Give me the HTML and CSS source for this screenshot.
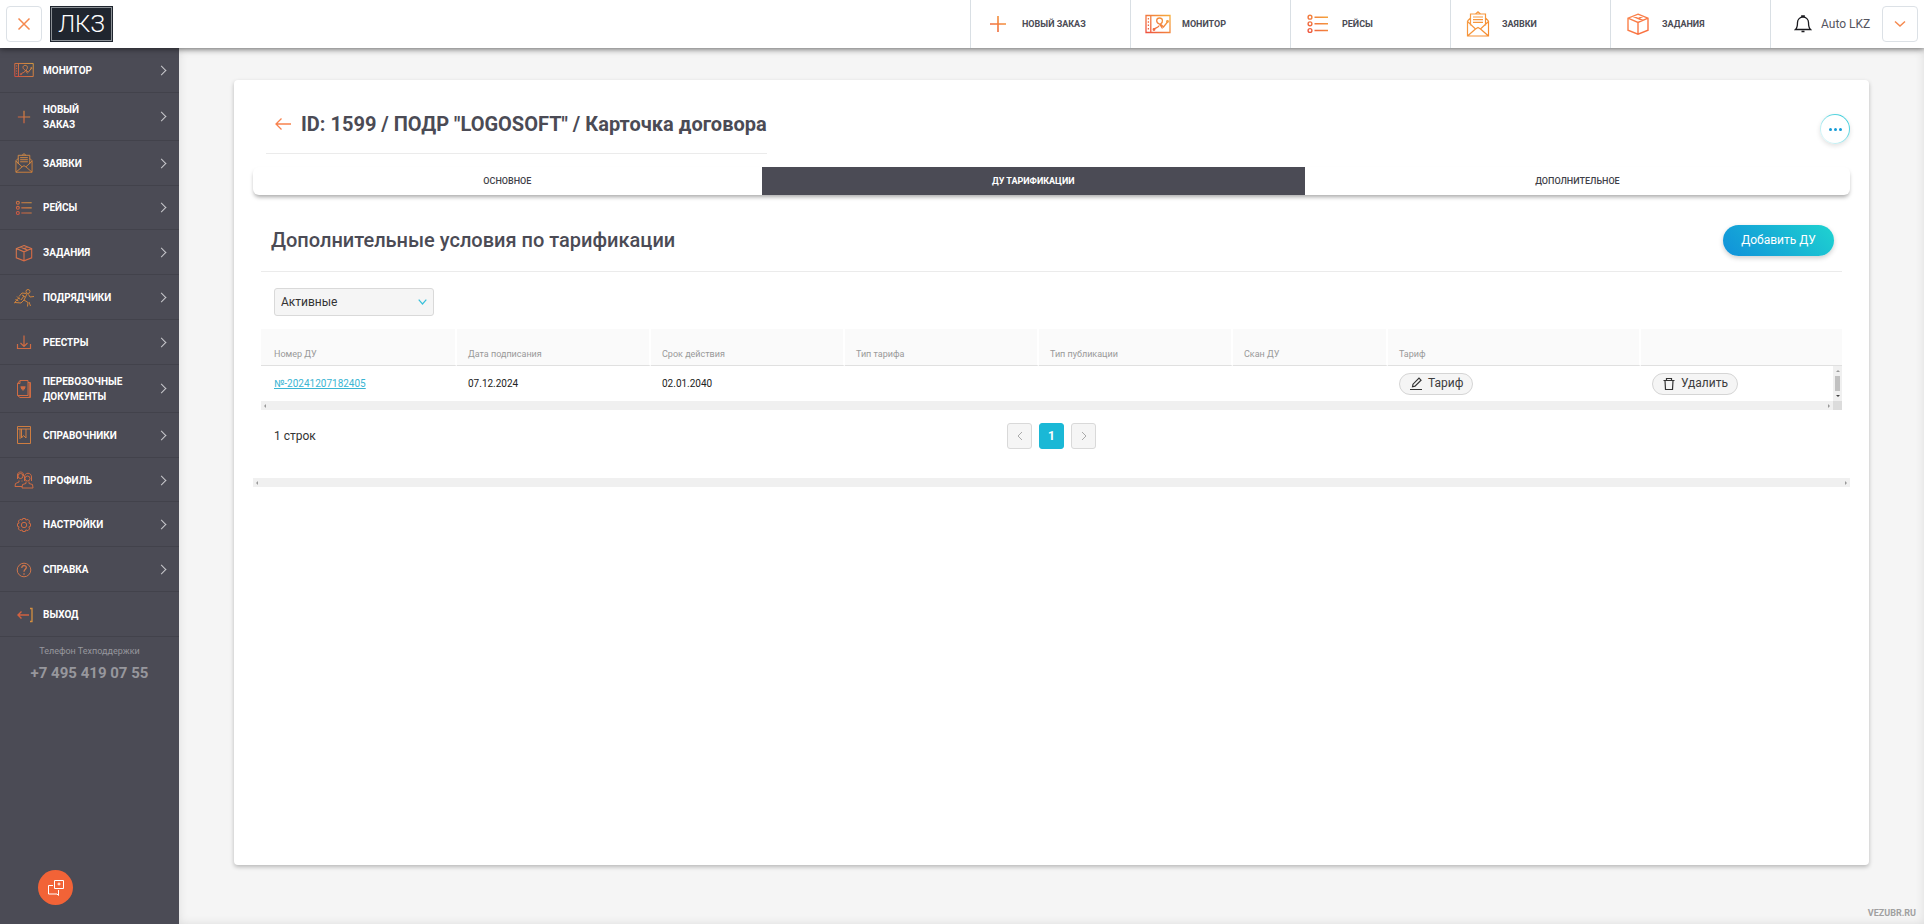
FILE: index.html
```
<!DOCTYPE html>
<html lang="ru">
<head>
<meta charset="utf-8">
<title>Карточка договора</title>
<link rel="stylesheet" href="styles.css">
</head>
<body>
<svg class="sprite" aria-hidden="true">
  <defs>
    <linearGradient id="warm" gradientUnits="userSpaceOnUse" x1="2" y1="24" x2="24" y2="2"><stop offset="0" stop-color="#ee4d3f"/><stop offset="1" stop-color="#f6b03c"/></linearGradient>
    <linearGradient id="amber" gradientUnits="userSpaceOnUse" x1="0" y1="0" x2="26" y2="26"><stop offset="0" stop-color="#f7a04a"/><stop offset="1" stop-color="#f58a2c"/></linearGradient>
    <linearGradient id="coral" gradientUnits="userSpaceOnUse" x1="0" y1="0" x2="26" y2="26"><stop offset="0" stop-color="#fb8a50"/><stop offset="1" stop-color="#f96a3c"/></linearGradient>
  </defs>
  <symbol id="i-plus" viewBox="0 0 26 26"><path d="M13 5v16M5 13h16" stroke="url(#warm)" stroke-width="1.6"/></symbol>
  <symbol id="i-monitor" viewBox="0 0 26 26"><g stroke="url(#warm)" stroke-width="1.3"><path d="M1 4.500h24v17H1zM5.800 4.500v17"/><path d="M3.400 7v1.500M3.400 10.300v1.500M3.400 13.600v1.500M3.400 17v1.500"/><path d="M9 18.500c1-2.500 5-1.500 5-4M17.500 17.500l-3-4.500c-4-1.500-3.500-6 0-6s4 4 1 6l3 3 4-5"/><circle cx="9" cy="18.500" r=".8"/><circle cx="22.500" cy="10.500" r=".8"/></g></symbol>
  <symbol id="i-mail" viewBox="0 0 26 26"><g stroke="url(#amber)" stroke-width="1.2"><path d="M5.500 14.500V3h15v11.500M2.500 10v15h21V10M2.500 10l3-3M23.500 10l-3-3M10.500 3L13 .8 15.500 3M2.500 10.500l8 7.500L13 16.500l2.500 1.500 8-7.500M2.500 25l8-7M23.500 25l-8-7"/><path d="M8 6h10M8 8.700h10M8 11.400h10"/></g></symbol>
  <symbol id="i-list" viewBox="0 0 26 26"><g stroke="url(#warm)" stroke-width="1.400"><circle cx="5" cy="6.200" r="1.900"/><circle cx="5" cy="12.800" r="1.900"/><circle cx="5" cy="19.500" r="1.900"/><path d="M9.500 6.200H23M9.500 12.800H23M9.500 19.500H23"/></g></symbol>
  <symbol id="i-box" viewBox="0 0 26 26"><path d="M13 3.200l10 4v12l-10 4-10-4v-12zM3 7.200l10 4.300 10-4.300M13 11.500v11.700M8 5.300l10 4.200M18 5.300l-4.500 2" stroke="url(#coral)" stroke-width="1.400"/></symbol>
</svg>

<header class="topbar">
  <div class="topbar-left">
    <button class="square-btn" aria-label="Закрыть меню"><svg width="14" height="14" viewBox="0 0 14 14"><path d="M1.500 1.500l11 11M12.500 1.500l-11 11" stroke="#f5894f" stroke-width="1.500"/></svg></button>
    <a class="logo" href="#">ЛКЗ</a>
  </div>
  <nav class="quick">
    <a href="#"><svg class="quick-icon"><use href="#i-plus"/></svg>НОВЫЙ ЗАКАЗ</a>
    <a href="#"><svg class="quick-icon"><use href="#i-monitor"/></svg>МОНИТОР</a>
    <a href="#"><svg class="quick-icon"><use href="#i-list"/></svg>РЕЙСЫ</a>
    <a href="#"><svg class="quick-icon"><use href="#i-mail"/></svg>ЗАЯВКИ</a>
    <a href="#"><svg class="quick-icon"><use href="#i-box"/></svg>ЗАДАНИЯ</a>
  </nav>
  <div class="user">
    <svg width="18" height="18" viewBox="0 0 18 18"><path d="M1.500 14.500C3 13 3.500 12 3.500 7.500a5.500 5.500 0 0 1 11 0C14.500 12 15 13 16.500 14.500zM7.800 2V.8h2.400V2M7.500 16.500h3" stroke="#1b1b1f" stroke-width="1.300"/></svg>
    <span class="user-name">Auto LKZ</span>
    <button class="square-btn" aria-label="Меню пользователя"><svg width="12" height="8" viewBox="0 0 12 8"><path d="M1 1.500l5 4.500 5-4.500" stroke="#f5894f" stroke-width="1.500"/></svg></button>
  </div>
</header>

<div class="shell">
  <aside class="sidebar">
    <nav class="menu">
      <a class="menu-item" href="#"><svg class="menu-icon"><use href="#i-monitor"/></svg><span>МОНИТОР</span><i class="arrow"></i></a>
      <a class="menu-item two-line" href="#"><svg class="menu-icon"><use href="#i-plus"/></svg><span>НОВЫЙ<br>ЗАКАЗ</span><i class="arrow"></i></a>
      <a class="menu-item" href="#"><svg class="menu-icon"><use href="#i-mail"/></svg><span>ЗАЯВКИ</span><i class="arrow"></i></a>
      <a class="menu-item" href="#"><svg class="menu-icon"><use href="#i-list"/></svg><span>РЕЙСЫ</span><i class="arrow"></i></a>
      <a class="menu-item" href="#"><svg class="menu-icon"><use href="#i-box"/></svg><span>ЗАДАНИЯ</span><i class="arrow"></i></a>
      <a class="menu-item" href="#"><svg class="menu-icon" viewBox="0 0 20 20"><g stroke="#f09238"><circle cx="14" cy="3.500" r="2"/><path d="M12.500 5.500L8 5 5 8.500M13 6l-3 6 4 2.500-.5 4M14.500 6.500L16 9l4-.5M10 12l-3 3-6-.5M8 7l2 1-3 4M0 15.500l4-5 2-.5M1.500 11.500l3 1.500M3 8.500l3 3M15 14l1.500 4M11 9l-1.500-1"/></g></svg><span>ПОДРЯДЧИКИ</span><i class="arrow"></i></a>
      <a class="menu-item" href="#"><svg class="menu-icon" viewBox="0 0 20 20"><path d="M10 3.500v11M6.500 11l3.500 3.500 3.500-3.500M3.500 12v4.500h13V12" stroke="#f0743f" stroke-width="1.200"/></svg><span>РЕЕСТРЫ</span><i class="arrow"></i></a>
      <a class="menu-item two-line" href="#"><svg class="menu-icon" viewBox="0 0 20 20"><path d="M6 1.500h8v15H3.500v-12zM6 1.500v3H3.500M14 3.500h2.500v15H6l-2.500-2M15.300 4v14" stroke="#f0743f"/><path d="M6.500 8h5M7 9.500h4M9 11.500V10" stroke="#f0743f" stroke-width="1.500"/></svg><span>ПЕРЕВОЗОЧНЫЕ<br>ДОКУМЕНТЫ</span><i class="arrow"></i></a>
      <a class="menu-item" href="#"><svg class="menu-icon" viewBox="0 0 20 20"><path d="M3.500 1.500h13v17h-13zM3.500 4h13M6 4v10M7.500 4v9l2-2.500L12 13V4" stroke="#f08a3c"/></svg><span>СПРАВОЧНИКИ</span><i class="arrow"></i></a>
      <a class="menu-item" href="#"><svg class="menu-icon" viewBox="0 0 20 20"><g stroke="#f0743f"><circle cx="6.500" cy="6" r="2.500"/><path d="M3.500 9V5c0-4 6-4 6 0v1M5 10.500v1.500l-3.500 1.500-.5 3h7M8 10.500v1"/><circle cx="13.500" cy="8.500" r="2.500"/><path d="M10.500 11V7c0-5 7-5 7 0v4M12 11.500v2l-3.500 1-.5 3.500h11l-.5-3.500-3.500-1v-2"/></g></svg><span>ПРОФИЛЬ</span><i class="arrow"></i></a>
      <a class="menu-item" href="#"><svg class="menu-icon" viewBox="0 0 20 20"><circle cx="10" cy="10" r="2.700" stroke="#f0743f"/><path d="M8.700 3.500h2.600l.6 1.600 2-.7 1.700 1.700-.7 2 1.600.6v2.600l-1.600.6.7 2-1.700 1.700-2-.7-.6 1.600H8.700l-.6-1.600-2 .7-1.700-1.700.7-2-1.600-.6V8.700l1.600-.6-.7-2 1.700-1.700 2 .7z" stroke="#f0743f"/></svg><span>НАСТРОЙКИ</span><i class="arrow"></i></a>
      <a class="menu-item" href="#"><svg class="menu-icon" viewBox="0 0 20 20"><circle cx="10" cy="10" r="6.800" stroke="#f08048"/><path d="M7.800 8c0-3.500 5-3 4.500-.3C12 9.300 10 9.500 10 11.800M10 13.300v1.400" stroke="#f08048" stroke-width="1.300"/></svg><span>СПРАВКА</span><i class="arrow"></i></a>
      <a class="menu-item" href="#"><svg class="menu-icon" viewBox="0 0 20 20"><path d="M15 10H4M7.500 6.500L4 10l3.500 3.500" stroke="#f4683c" stroke-width="1.400"/><path d="M16 3.500h2v13h-2" stroke="#f6a03c" stroke-width="1.300"/></svg><span>ВЫХОД</span></a>
    </nav>
    <div class="support"><p>Телефон Техподдержки</p><a href="tel:+74954190755">+7 495 419 07 55</a></div>
    <button class="chat" aria-label="Чат"><svg width="18" height="18" viewBox="0 0 18 18"><path d="M7.500 1.500h9v8h-9zM6 6.500H1.500v8.500h8.500l1.500 1.500V11M12 3.500v3M10.500 5h3" stroke="#fff"/></svg></button>
  </aside>

  <main class="main">
    <section class="card">
      <div class="card-head">
        <div class="title">
          <a href="#" aria-label="Назад"><svg width="16" height="14" viewBox="0 0 16 14"><path d="M16 7H1M6.500 1.500L1 7l5.500 5.500" stroke="#f8824e" stroke-width="1.300"/></svg></a>
          <h1>ID: 1599 / ПОДР "LOGOSOFT" / Карточка договора</h1>
        </div>
        <button class="more" aria-label="Ещё"><i></i><i></i><i></i></button>
      </div>
      <div class="tabs" role="tablist">
        <button role="tab">ОСНОВНОЕ</button>
        <button role="tab" class="active" aria-selected="true">ДУ ТАРИФИКАЦИИ</button>
        <button role="tab">ДОПОЛНИТЕЛЬНОЕ</button>
      </div>
      <div class="content">
        <div class="section-head">
          <h2>Дополнительные условия по тарификации</h2>
          <button class="add">Добавить ДУ</button>
        </div>
        <div class="filter">
          <select aria-label="Статус"><option>Активные</option></select>
          <svg class="filter-arrow" width="9" height="6" viewBox="0 0 9 6"><path d="M.7.700l3.800 4.300L8.300.7" stroke="#38c0da" stroke-width="1.200"/></svg>
        </div>
        <div class="grid-box">
          <table>
            <colgroup><col class="c-first"><col class="c-mid"><col class="c-mid"><col class="c-mid"><col class="c-mid"><col class="c-scan"><col class="c-rate"><col></colgroup>
            <thead><tr><th>Номер ДУ</th><th>Дата подписания</th><th>Срок действия</th><th>Тип тарифа</th><th>Тип публикации</th><th>Скан ДУ</th><th>Тариф</th><th></th></tr></thead>
            <tbody><tr>
              <td><a href="#">№-20241207182405</a></td><td>07.12.2024</td><td>02.01.2040</td><td></td><td></td><td></td>
              <td><button class="pill"><svg width="14" height="14" viewBox="0 0 14 14"><path d="M1 12.500h12M3.500 9.800l.5-2.600L10 1.200l2 2-6 6z" stroke="#333" stroke-width="1.200"/></svg>Тариф</button></td>
              <td><button class="pill"><svg width="14" height="14" viewBox="0 0 14 14"><path d="M1.500 3.500h11M3 3.500l.5 9h7l.5-9M4.500 3.500v-2h5v2" stroke="#333" stroke-width="1.200"/></svg>Удалить</button></td>
            </tr></tbody>
          </table>
          <div class="vscroll"><i class="up"></i><i class="thumb"></i><i class="down"></i></div>
          <div class="hscroll inner"><i class="left"></i><i class="right"></i></div>
        </div>
        <div class="pager">
          <span class="count">1 строк</span>
          <div class="pages">
            <button aria-label="Предыдущая"><svg width="6" height="10" viewBox="0 0 6 10"><path d="M5 1L1 5l4 4" stroke="#aaa"/></svg></button>
            <button class="current">1</button>
            <button aria-label="Следующая"><svg width="6" height="10" viewBox="0 0 6 10"><path d="M1 1l4 4-4 4" stroke="#aaa"/></svg></button>
          </div>
        </div>
      </div>
      <div class="hscroll"><i class="left"></i><i class="right"></i></div>
    </section>
    <footer class="footer">VEZUBR.RU</footer>
  </main>
</div>
</body>
</html>
```
FILE: styles.css
```
* { box-sizing: border-box; }
body {
  margin: 0;
  min-height: 100vh;
  display: flex;
  flex-direction: column;
  font-family: Roboto, sans-serif;
  font-size: 10px;
  line-height: 15px;
  color: #333;
  background: #f5f5f5;
}
svg { fill: none; flex: none; }
a { color: inherit; text-decoration: none; }
button { font: inherit; color: inherit; padding: 0; border: 0; background: none; cursor: pointer; }
h1, h2, p { margin: 0; }
.sprite { position: absolute; width: 0; height: 0; }

/* Top bar */
.topbar {
  position: relative;
  z-index: 2;
  display: flex;
  height: 48px;
  background: #fff;
  box-shadow: 0 1px 6px rgba(0, 0, 0, .55);
}
.topbar-left { flex: 1; display: flex; align-items: center; gap: 8px; padding-left: 6px; }
.square-btn {
  width: 36px;
  height: 36px;
  display: grid;
  place-items: center;
  border: 1px solid #dce1e6;
  border-radius: 4px;
  background: #fff;
}
.logo {
  width: 63px;
  height: 36px;
  border: 1px solid #20262f;
  outline: 1px solid #8c9196;
  outline-offset: -2px;
  background: #20262f;
  color: #fff;
  font-size: 24px;
  font-weight: 300;
  line-height: 34px;
  text-align: center;
}
.quick { display: flex; }
.quick a {
  width: 160px;
  display: flex;
  align-items: center;
  gap: 11px;
  padding-left: 14px;
  border-left: 1px solid #d9dfe4;
  color: #4b4b55;
  font-weight: 700;
  font-size: 9px;
}
.quick-icon { width: 26px; height: 26px; }
.user {
  width: 154px;
  display: flex;
  align-items: center;
  gap: 9px;
  padding: 0 6px 0 23px;
  border-left: 1px solid #d9dfe4;
  color: #55555f;
  font-size: 12px;
}
.user-name { flex: 1; white-space: nowrap; }

/* Layout */
.shell { flex: 1; display: flex; }
.sidebar { width: 179px; background: #4b4b55; color: #fff; position: relative; }
.menu { min-height: 589px; display: flex; flex-direction: column; }
.menu-item {
  flex: 1 0 44px;
  display: flex;
  align-items: center;
  gap: 9px;
  padding: 1px 14px 0;
  border-bottom: 1px solid #42424b;
  font-weight: 700;
}
.two-line { flex-basis: 47px; }
.menu-icon { width: 20px; height: 20px; opacity: .8; }
.menu-item span { flex: 1; }
.arrow { width: 7px; height: 7px; border: solid #c9c9cd; border-width: 1px 1px 0 0; transform: rotate(45deg); }
.support { padding-top: 7px; text-align: center; color: #97979d; font-size: 9px; }
.support a { display: block; margin-top: 4px; font-size: 15px; font-weight: 700; line-height: 20px; }
.chat {
  position: absolute;
  left: 38px;
  bottom: 19px;
  width: 35px;
  height: 35px;
  display: grid;
  place-items: center;
  border-radius: 50%;
  background: #f26337;
}
.main {
  flex: 1;
  min-width: 0;
  display: flex;
  flex-direction: column;
  padding: 32px 55px 0;
  box-shadow: inset 0 0 10px rgba(0, 0, 0, .1);
}
.card {
  flex: 1;
  padding: 0 19px;
  border-radius: 4px;
  background: #fff;
  box-shadow: 0 2px 4px rgba(0, 0, 0, .25);
}
.footer {
  height: 59px;
  padding-top: 41px;
  margin-right: -47px;
  text-align: right;
  color: #a0a0a0;
  font-size: 9px;
  font-weight: 700;
}

/* Card */
.card-head { display: flex; justify-content: space-between; align-items: center; height: 87px; }
.title {
  display: flex;
  align-items: center;
  gap: 10px;
  height: 61px;
  margin-left: 13px;
  padding: 2px 0 0 9px;
  border-bottom: 1px solid #ebebeb;
}
.title a { display: flex; }
h1, h2 { font-size: 20px; line-height: 26px; color: #4b4b55; }
h1 { font-weight: 700; }
h2 { font-weight: 500; }
.more {
  width: 30px;
  height: 30px;
  margin-top: 11px;
  display: flex;
  justify-content: center;
  align-items: center;
  gap: 2px;
  border: 1px solid transparent;
  border-radius: 50%;
  background: linear-gradient(#fff, #fff) padding-box, linear-gradient(45deg, #fff, #19c5d4) border-box;
  box-shadow: 0 2px 5px rgba(0, 0, 0, .12);
}
.more i { width: 3px; height: 3px; border-radius: 50%; background: #149bd7; }
.tabs {
  display: flex;
  height: 28px;
  border-radius: 6px;
  box-shadow: 0 3px 4px -1px rgba(0, 0, 0, .35);
}
.tabs button { flex: 1 1 auto; color: #3f3f48; font-size: 9px; font-weight: 500; }
.tabs .active { background: #4b4b55; color: #fff; font-weight: 700; }
.content { padding: 0 8px; }
.section-head {
  display: flex;
  justify-content: space-between;
  align-items: center;
  height: 77px;
  padding: 14px 8px 0 10px;
  border-bottom: 1px solid #ebebeb;
}
.add {
  width: 111px;
  height: 31px;
  border-radius: 16px;
  background: linear-gradient(45deg, #1090da, #1fd3d0);
  box-shadow: 0 2px 5px rgba(0, 0, 0, .2);
  color: #fff;
  font-size: 12px;
}
.filter { position: relative; width: 160px; margin: 16px 13px 13px; }
.filter select {
  width: 100%;
  height: 28px;
  padding: 0 6px;
  border: 1px solid #d9d9d9;
  border-radius: 3px;
  background: #f5f5f5;
  appearance: none;
  color: #333;
  font: 12px Roboto, sans-serif;
  display: block;
}
.filter-arrow { position: absolute; right: 7px; top: 11px; pointer-events: none; }

/* Table */
.grid-box { position: relative; }
table { width: 100%; table-layout: fixed; border-collapse: separate; border-spacing: 0; }
.c-first { width: 196px; }
.c-mid { width: 194px; }
.c-scan { width: 155px; }
.c-rate { width: 253px; }
th {
  height: 37px;
  padding: 14px 11px 0;
  border-right: 2px solid #fff;
  border-bottom: 1px solid #e0e0e0;
  background: #fafafa;
  color: #999;
  font-weight: 400;
  font-size: 9px;
  text-align: left;
}
th:last-child { border-right: 0; }
td { height: 35px; padding: 0 11px; color: #222; }
th:first-child, td:first-child { padding-left: 13px; }
td a { color: #3ab5d3; text-decoration: underline; }
.pill {
  display: flex;
  align-items: center;
  gap: 5px;
  height: 22px;
  padding: 0 9px;
  border: 1px solid #d5d5d5;
  border-radius: 11px;
  background: #f5f5f5;
  color: #3d3d3d;
  font-size: 12px;
}
.hscroll { display: flex; justify-content: space-between; align-items: center; height: 9px; padding: 0 3px; background: #f0f0f0; }
.hscroll i { border: 2px solid transparent; }
.hscroll .left { border-right-color: #999; border-left: 0; }
.hscroll .right { border-left-color: #999; border-right: 0; }
.inner { border-right: 9px solid #dcdcdc; }
.vscroll {
  position: absolute;
  right: 0;
  bottom: 9px;
  width: 9px;
  height: 35px;
  display: flex;
  flex-direction: column;
  align-items: center;
  justify-content: space-between;
  padding: 4px 0;
  background: #f0f0f0;
}
.vscroll .up { border: 2px solid transparent; border-top: 0; border-bottom-color: #999; }
.vscroll .thumb { width: 5px; height: 15px; background: #c1c1c1; }
.vscroll .down { border: 2px solid transparent; border-bottom: 0; border-top-color: #444; }

/* Pagination */
.pager {
  display: grid;
  grid-template-columns: 1fr auto 1fr;
  align-items: center;
  height: 68px;
  padding: 0 13px 16px;
  font-size: 12px;
}
.pages { display: flex; gap: 7px; }
.pages button {
  width: 25px;
  height: 26px;
  display: grid;
  place-items: center;
  border: 1px solid #d9d9d9;
  border-radius: 3px;
  background: #f5f5f5;
}
.pages .current { border-color: #1ab8d6; background: #1ab8d6; color: #fff; font-weight: 700; }
```
